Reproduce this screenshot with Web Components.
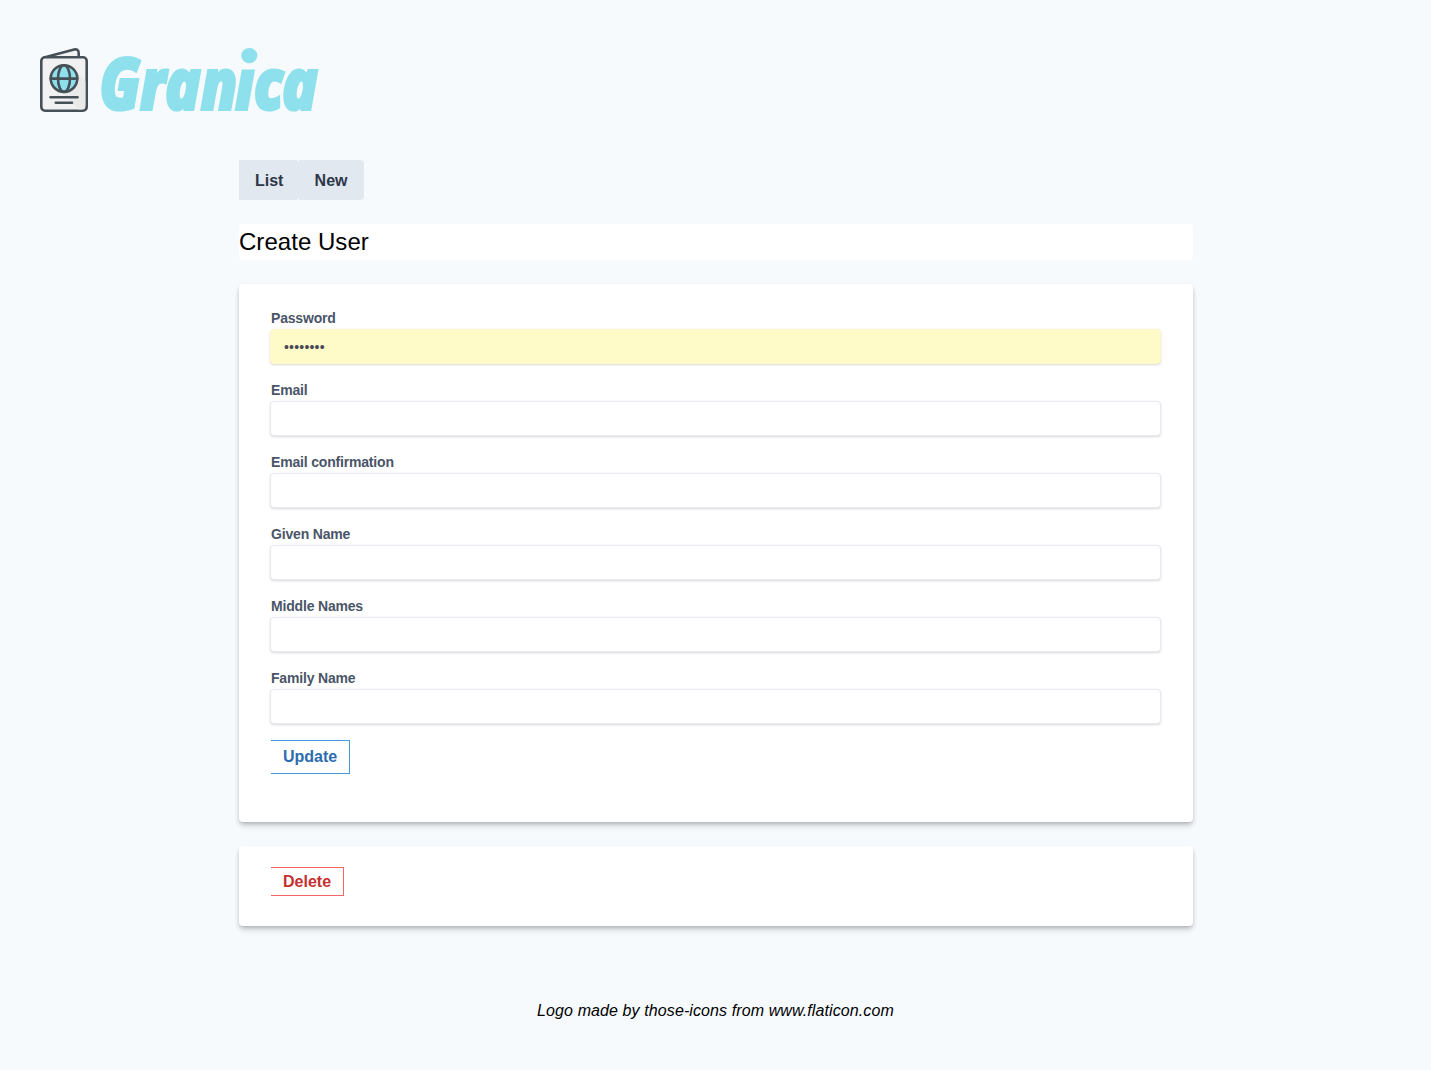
<!DOCTYPE html>
<html lang="en"><head><meta charset="utf-8"><title>Granica</title>
<style>
html,body{margin:0;background:#f7fafd}
body{font:16px/24px "Liberation Sans",Arial,sans-serif;color:#000;min-height:1070px}
</style></head><body>
<granica-app></granica-app>
<script>
function define(name, html){
  customElements.define(name, class extends HTMLElement{
    constructor(){super();this.attachShadow({mode:'open'}).innerHTML='<style>*{box-sizing:border-box}:host{display:block;box-sizing:border-box}</style>'+html;}
  });
}
define('granica-logo', `<style>:host{height:64px;display:flex}svg{display:block;overflow:visible}</style>
<svg width="48" height="64" viewBox="0 0 48 64" fill="none" stroke="#465157" stroke-width="2.6" stroke-linejoin="round" stroke-linecap="round">
<path d="M5 9.3 34.2 1.5Q38.7 .8 38.7 5V9.3" fill="#f2f2f2"/>
<path d="M34 21 45.4 33V61.4H39L17 39Z" fill="#e9e9e9" stroke="none"/>
<rect x="1.3" y="9.3" width="45.4" height="53.4" rx="3.7" fill="#f1f1f1"/>
<path d="M34 21 45.4 33V56Q45.4 61.4 41 61.4H39L17 39Z" fill="#e9e9e9" stroke="none"/>
<circle cx="24" cy="30.6" r="13.3" fill="#8ee1ec"/>
<ellipse cx="24" cy="30.6" rx="6" ry="13.3"/><path d="M10.7 30.6H37.3M10.5 49.2H37.5M15.8 54.7H32"/>
</svg>
<svg width="231" height="64" viewBox="0 0 231 64"><text transform="translate(0 61.7) scale(.83 1)" x="13.5 62.5 92.5 135.5 177 199.5 233.5" y="0" font-family="Open Sans" font-size="72" font-style="italic" font-weight="800" fill="#8ee1ec" stroke="#8ee1ec" stroke-width="2.2">Granica</text><path d="M150 3H172V21.5H150Z" fill="#f7fafd"/><ellipse cx="161.3" cy="7.6" rx="8.1" ry="7.6" fill="#8ee1ec"/></svg>`);
define('nav-tab', `<style>:host{height:40px;padding:9px 16px 7px;background:#e2e8f0;color:#2d3748;font-weight:700;border-radius:0 4px 4px 0}</style><slot></slot>`);
define('page-title', `<style>:host{height:36px;margin:24px 0;background:#fff;border-radius:4px;font-size:24px;line-height:36px;letter-spacing:.04px}</style><slot></slot>`);
define('ui-card', `<style>:host{padding:24px 32px;background:#fff;border-radius:4px;box-shadow:0 4px 6px -1px rgba(0,0,0,.2),0 2px 4px -1px rgba(0,0,0,.18)}</style><slot></slot>`);
define('action-button', `<style>:host{width:max-content;border:1px solid #4299e1;border-left:0;color:#2b6cb0;padding:4px 12px;font-weight:700}:host([danger]){border-color:#f56565;color:#c53030;padding:2px 12px;height:29px}</style><slot></slot>`);
customElements.define('form-field', class extends HTMLElement{
  constructor(){super();this.attachShadow({mode:'open'}).innerHTML=`<style>:host{display:block;height:56px;margin-bottom:16px}
  label{display:block;font-size:14px;font-weight:700;line-height:20px;color:#4a5568;letter-spacing:-.18px}
  .input{box-sizing:border-box;height:35px;margin:1px 0 0 -1px;border:1px solid #e7eaf1;border-radius:4px;padding:8px 13px;box-shadow:0 1px 3px rgba(0,0,0,.1),0 1px 2px rgba(0,0,0,.06);color:#4a5568;font-size:14px;line-height:18px;letter-spacing:.2px;background:#fff}
  :host([filled]) .input{background:#fffbc8;border-color:#fef7c8;color:#4a4856}</style><label><slot></slot></label><div class="input"><slot name="value"></slot></div>`;}
});
define('granica-app', `<style>
header{padding:48px 40px}main{width:954px;margin:0 238px 0 239px}nav{display:flex}
nav nav-tab:first-child{width:59.6px}nav nav-tab:last-child{width:65.4px}.form{height:538px}.danger{height:80px;margin-top:24px;padding-top:21px}
footer{text-align:center;font-style:italic;margin-top:73px;letter-spacing:.1px}
</style><header><granica-logo></granica-logo></header>
<main><nav><nav-tab>List</nav-tab><nav-tab>New</nav-tab></nav><page-title>Create User</page-title>
<ui-card class="form"><form-field filled>Password<span slot="value">••••••••</span></form-field><form-field>Email</form-field><form-field>Email confirmation</form-field><form-field>Given Name</form-field><form-field>Middle Names</form-field><form-field>Family Name</form-field><action-button>Update</action-button></ui-card>
<ui-card class="danger"><action-button danger>Delete</action-button></ui-card></main>
<footer>Logo made by those-icons from www.flaticon.com</footer>`);
</script></body></html>
